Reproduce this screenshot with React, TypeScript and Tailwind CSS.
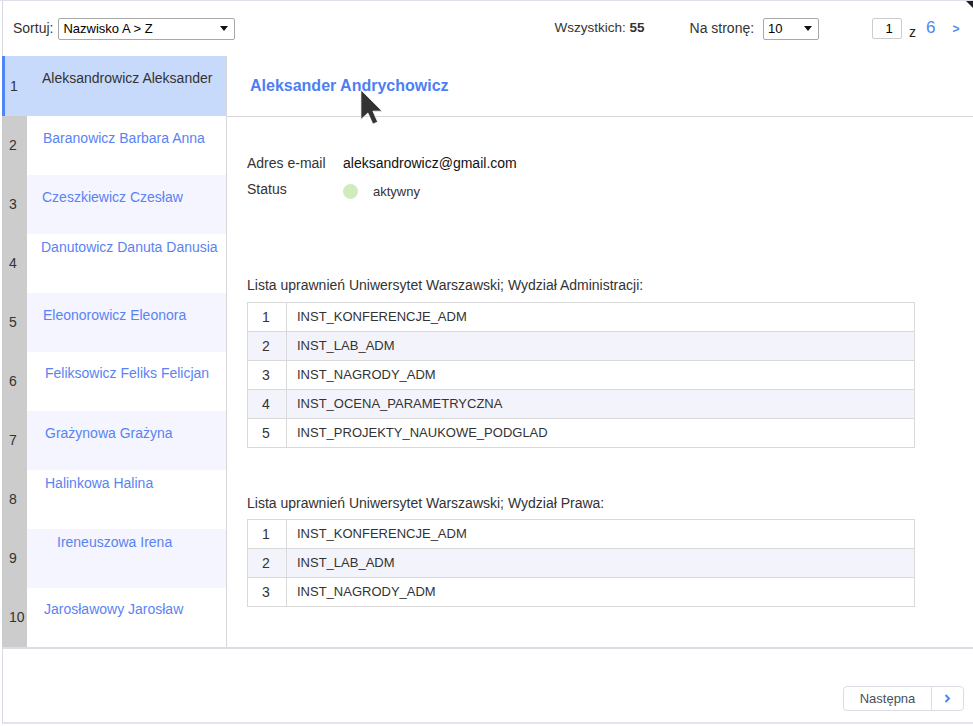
const people = [
  { name: 'Aleksandrowicz Aleksander', pl: 15, pt: 14 },
  { name: 'Baranowicz Barbara Anna', pl: 16, pt: 14 },
  { name: 'Czeszkiewicz Czesław', pl: 15, pt: 14 },
  { name: 'Danutowicz Danuta Danusia', pl: 14, pt: 5 },
  { name: 'Eleonorowicz Eleonora', pl: 16, pt: 14 },
  { name: 'Feliksowicz Feliks Felicjan', pl: 18, pt: 13 },
  { name: 'Grażynowa Grażyna', pl: 18, pt: 14 },
  { name: 'Halinkowa Halina', pl: 18, pt: 5 },
  { name: 'Ireneuszowa Irena', pl: 30, pt: 5 },
  { name: 'Jarosławowy Jarosław', pl: 17, pt: 13 },
];

const adminRights = [
  'INST_KONFERENCJE_ADM',
  'INST_LAB_ADM',
  'INST_NAGRODY_ADM',
  'INST_OCENA_PARAMETRYCZNA',
  'INST_PROJEKTY_NAUKOWE_PODGLAD',
];

const lawRights = ['INST_KONFERENCJE_ADM', 'INST_LAB_ADM', 'INST_NAGRODY_ADM'];

function SelectBox({ value, width }: { value: string; width: string }) {
  return (
    <div
      className={`flex items-center justify-between h-[22px] ${width} border border-[#a9a9a9] rounded-[2px] bg-white pl-[4px] pr-[6px] text-[13px] text-black`}
    >
      <span>{value}</span>
      <svg width="8" height="5" viewBox="0 0 8 5">
        <polygon points="0,0 8,0 4,5" fill="#111" />
      </svg>
    </div>
  );
}

function RightsTable({ rows }: { rows: string[] }) {
  return (
    <div className="w-[668px] border border-[#d9d9d9] border-b-0">
      {rows.map((r, i) => (
        <div
          key={r}
          className={`flex h-[29px] border-b border-[#d9d9d9] text-[13px] text-[#333] ${i % 2 === 1 ? 'bg-[#f3f3fb]' : 'bg-white'}`}
        >
          <div className="w-[39px] shrink-0 border-r border-[#d9d9d9] flex items-center justify-center pr-[2px] text-[14px]">
            {i + 1}
          </div>
          <div className="flex items-center pl-[10px]">{r}</div>
        </div>
      ))}
    </div>
  );
}

export default function App() {
  return (
    <div
      className="relative w-[973px] h-[726px] bg-white border-t border-[#dde0e8] overflow-hidden"
      style={{ fontFamily: '"Liberation Sans", Arial, sans-serif' }}
    >
      <div className="ml-[2px] flex flex-col">
        {/* Top bar */}
        <div className="h-[55px] flex items-center border-l border-[#d8d8e0] pl-[10px] text-[#333]">
          <span className="text-[14px] mr-[5px]">Sortuj:</span>
          <SelectBox value="Nazwisko A > Z" width="w-[177px]" />
          <span className="ml-[319px] text-[13.5px]">
            Wszystkich: <b>55</b>
          </span>
          <span className="ml-[45px] text-[14px]">Na stronę:</span>
          <div className="ml-[9px]">
            <SelectBox value="10" width="w-[56px]" />
          </div>
          <div className="ml-[53px] w-[30px] h-[21px] border border-[#cccccc] rounded-[2px] flex items-center justify-center text-[13px] text-black pl-[4px]">
            1
          </div>
          <span className="ml-[7px] mt-[8px] text-[14px] text-[#222]">z</span>
          <span className="ml-[10px] mb-[2px] text-[17px] text-[#4d86f3]">6</span>
          <span className="ml-[17px] text-[12px] text-[#4d86f3] font-bold">&gt;</span>
        </div>

        {/* Main */}
        <div className="flex h-[591px]">
          <div className="w-[224px] shrink-0 flex flex-col">
            {people.map((p, i) => {
              const selected = i === 0;
              const alt = i % 2 === 0 && i > 0;
              return (
                <div key={p.name} className={`flex ${i === 0 ? 'h-[60px]' : 'h-[59px]'}`}>
                  <div
                    className={`w-[25px] shrink-0 flex items-center text-[14px] text-[#333] ${selected ? 'bg-[#c8dafc] border-l-[3px] border-[#4f86f7] pl-[5px]' : 'bg-[#cccccc] pl-[7px]'}`}
                  >
                    {i + 1}
                  </div>
                  <div
                    className={`flex-1 text-[14px] leading-[16px] ${selected ? 'bg-[#c8dafc] text-[#333]' : alt ? 'bg-[#f4f5fe] text-[#5a83f2]' : 'bg-white text-[#5a83f2]'}`}
                    style={{ paddingLeft: p.pl, paddingTop: p.pt }}
                  >
                    {p.name}
                  </div>
                </div>
              );
            })}
          </div>

          <div className="flex-1 border-l border-[#d8d8d8] flex flex-col">
            <div className="h-[61px] border-b border-[#d8d8d8] flex items-center pl-[23px] text-[16px] font-bold text-[#4d7ff2]">
              Aleksander Andrychowicz
            </div>
            <div className="pl-[20px] flex flex-col">
              <div className="mt-[33px] flex h-[26px] items-center text-[14px]">
                <span className="w-[96px] text-[#333]">Adres e-mail</span>
                <span className="text-[#111]">aleksandrowicz@gmail.com</span>
              </div>
              <div className="flex h-[26px] items-center text-[14px]">
                <span className="w-[96px] text-[#333]">Status</span>
                <span className="mt-[5px] w-[15px] h-[15px] rounded-full bg-[#d0ecbf]" />
                <span className="ml-[15px] mt-[5px] text-[13px] text-[#333]">aktywny</span>
              </div>

              <div className="mt-[74px] text-[14px] leading-[18px] text-[#333]">
                Lista uprawnień Uniwersytet Warszawski; Wydział Administracji:
              </div>
              <div className="mt-[8px]">
                <RightsTable rows={adminRights} />
              </div>

              <div className="mt-[46px] text-[14px] leading-[18px] text-[#333]">
                Lista uprawnień Uniwersytet Warszawski; Wydział Prawa:
              </div>
              <div className="mt-[7px]">
                <RightsTable rows={lawRights} />
              </div>
            </div>
          </div>
        </div>

        {/* Footer */}
        <div className="h-[77px] border-t-2 border-b-2 border-l border-t-[#dcdce4] border-b-[#e2e4ef] border-l-[#d8d8e0] flex justify-end items-start pt-[37px] pr-[9px]">
          <div className="flex h-[25px] w-[121px] border border-[#dcdce4] rounded-[4px] bg-white">
            <div className="w-[88px] flex items-center justify-center text-[13px] text-[#4a4f5c] border-r border-[#dcdce4]">
              Następna
            </div>
            <div className="flex-1 flex items-center justify-center">
              <svg width="7" height="9" viewBox="0 0 7 9">
                <polyline points="1.5,1 5,4.5 1.5,8" fill="none" stroke="#4d86f3" strokeWidth="2" />
              </svg>
            </div>
          </div>
        </div>
      </div>

      {/* corner mark */}
      <svg className="absolute top-0 right-0" width="8" height="7" viewBox="0 0 8 7">
        <polygon points="1,0 8,0 8,7" fill="#222" />
      </svg>

      {/* mouse cursor */}
      <svg className="absolute left-[360px] top-[88px]" width="23" height="36" viewBox="0 0 12.5 19.5">
        <polygon
          points="0.5,0.5 0.5,16.5 4.3,13 7,19 9.6,17.9 7,12 12,12"
          fill="#333"
          stroke="#fff"
          strokeWidth="0.4"
        />
      </svg>
    </div>
  );
}
